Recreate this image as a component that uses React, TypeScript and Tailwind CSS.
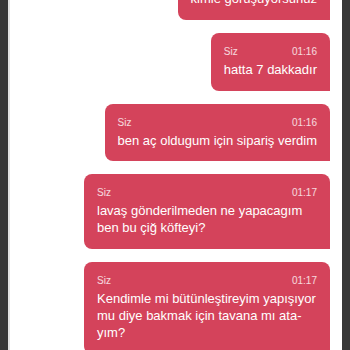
type Message = {
  author: string;
  time: string;
  lines: string[];
};

const messages: Message[] = [
  { author: "Siz", time: "01:15", lines: ["kimle görüşüyorsunuz"] },
  { author: "Siz", time: "01:16", lines: ["hatta 7 dakkadır"] },
  { author: "Siz", time: "01:16", lines: ["ben aç oldugum için sipariş verdim"] },
  { author: "Siz", time: "01:17", lines: ["lavaş gönderilmeden ne yapacagım", "ben bu çiğ köfteyi?"] },
  {
    author: "Siz",
    time: "01:17",
    lines: ["Kendimle mi bütünleştireyim yapışıyor", "mu diye bakmak için tavana mı ata-", "yım?"],
  },
];

const Bubble = ({ msg, first }: { msg: Message; first?: boolean }) => {
  const multi = msg.lines.length > 1;
  return (
    <div
      className={`shrink-0 rounded-lg rounded-br-none bg-[#d4435b] px-[13px] pt-3 pb-[12.7px] text-white ${
        multi ? "w-[246px]" : "w-fit"
      } ${first ? "-mt-[37.7px]" : ""}`}
    >
      <div className="flex justify-between gap-4 text-[10px] leading-[13px] text-white/80 mb-[3px]">
        <span>{msg.author}</span>
        <span>{msg.time}</span>
      </div>
      <p className="whitespace-nowrap text-[13px] leading-[17px]">
        {msg.lines.map((l, i) => (
          <span key={i} className="block">
            {l}
          </span>
        ))}
      </p>
    </div>
  );
};

const App = () => {
  return (
    <div
      className="flex h-[350px] w-[350px] overflow-hidden bg-[#383838] px-2"
      style={{ fontFamily: '"Liberation Sans", Arial, sans-serif' }}
    >
      <div className="flex flex-1 flex-col items-end gap-[13px] overflow-hidden border-l-2 border-[#e4e4e4] bg-white pr-3">
        {messages.map((m, i) => (
          <Bubble key={i} msg={m} first={i === 0} />
        ))}
      </div>
    </div>
  );
};

export default App;
